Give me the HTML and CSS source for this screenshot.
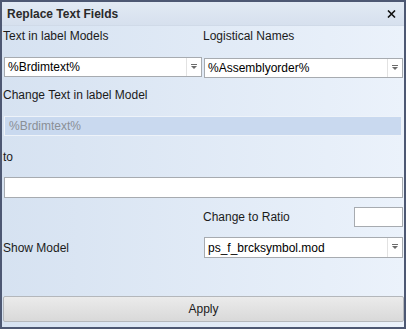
FILE: index.html
```html
<!DOCTYPE html>
<html>
<head>
<meta charset="utf-8">
<link rel="stylesheet" href="styles.css">
</head>
<body>
<div class="window">
  <div class="titlebar">
    <span class="title">Replace Text Fields</span>
    <svg class="close" width="9" height="8" viewBox="0 0 9 8"><path d="M1 0.5 L8 7.5 M8 0.5 L1 7.5" stroke="#111" stroke-width="1.6" fill="none"/></svg>
  </div>
  <div class="content">
    <div class="row row-labels">
      <span class="label">Text in label Models</span>
      <span class="label">Logistical Names</span>
    </div>
    <div class="row row-combos">
      <div class="combo"><span class="value">%Brdimtext%</span><span class="drop"><i class="arrow"></i></span></div>
      <div class="combo combo-low"><span class="value">%Assemblyorder%</span><span class="drop"><i class="arrow"></i></span></div>
    </div>
    <div class="line line-change"><span class="label">Change Text in label Model</span></div>
    <div class="textbox disabled">%Brdimtext%</div>
    <div class="line line-to"><span class="label">to</span></div>
    <div class="textbox"></div>
    <div class="row row-ratio">
      <span></span>
      <div class="ratio">
        <span class="label">Change to Ratio</span>
        <div class="small-box"></div>
      </div>
    </div>
    <div class="row row-model">
      <span class="label">Show Model</span>
      <div class="combo"><span class="value">ps_f_brcksymbol.mod</span><span class="drop"><i class="arrow"></i></span></div>
    </div>
    <div class="spacer"></div>
    <button class="apply">Apply</button>
  </div>
</div>
</body>
</html>
```

FILE: styles.css
```css
* { box-sizing: border-box; }
html, body { margin: 0; padding: 0; }
body {
  width: 406px;
  height: 329px;
  font-family: "Liberation Sans", Arial, sans-serif;
  font-size: 12px;
  color: #1b1b1b;
}
.window {
  width: 406px;
  height: 329px;
  border: 2px solid #4d5873;
  display: flex;
  flex-direction: column;
  background: linear-gradient(to right, #d6e2f1, #ebf2fb);
}
.titlebar {
  height: 24px;
  flex: none;
  display: flex;
  align-items: center;
  justify-content: space-between;
  padding: 0 8px 0 5px;
  background: linear-gradient(to bottom, #e2eaf4, #d6e0ee);
  border-bottom: 1px solid #d0dae8;
}
.title {
  font-weight: bold;
  font-size: 12px;
  color: #2a2a2a;
}
.close { display: block; }
.content {
  flex: 1;
  display: flex;
  flex-direction: column;
  padding: 0 2px 5px 2px;
}
.row {
  display: grid;
  grid-template-columns: 198px 199px;
  column-gap: 2px;
  align-items: center;
}
.label { margin-left: -1px; white-space: nowrap; }
.row-labels { height: 20px; margin-bottom: 11px; }
.row-combos { height: 22px; align-items: start; }
.combo {
  height: 20px;
  border: 1px solid #a7abb0;
  background: #fff;
  display: flex;
  align-items: center;
}
.combo-low { margin-top: 1px; }
.combo .value { flex: 1; padding-left: 3px; color: #000; }
.drop {
  width: 15px;
  height: 100%;
  border-left: 1px solid #e2e2e2;
  display: flex;
  align-items: center;
  justify-content: center;
}
.arrow {
  display: block;
  width: 0; height: 0;
  border-left: 3px solid transparent;
  border-right: 3px solid transparent;
  border-top: 3px solid #6b6b6b;
  position: relative;
}
.arrow::before {
  content: "";
  position: absolute;
  left: -3px; top: -5px;
  width: 6px; height: 1px;
  background: #6b6b6b;
}
.line { height: 20px; display: flex; align-items: center; }
.line-change { margin-top: 6px; margin-bottom: 11px; }
.line-to { margin-top: 11px; margin-bottom: 10px; }
.textbox {
  height: 21px;
  border: 1px solid #a7abb0;
  background: #fff;
  width: 399px;
  padding-left: 4px;
  display: flex;
  align-items: center;
}
.textbox.disabled {
  background: #c9d9ef;
  border-color: #eef3f9;
  color: #8a8f96;
  height: 20px;
  width: 398px;
}
.row-ratio { height: 20px; margin-top: 9px; }
.ratio { display: flex; align-items: center; justify-content: space-between; }
.small-box {
  width: 49px;
  height: 20px;
  border: 1px solid #a7abb0;
  background: #fff;
}
.row-model { height: 21px; margin-top: 10px; }
.row-model .combo { height: 21px; }
.spacer { flex: 1; }
.apply {
  height: 26px;
  width: 401px;
  margin-left: -1px;
  font-family: inherit;
  font-size: 12px;
  color: #1b1b1b;
  border: 1px solid #b4b7bb;
  border-radius: 2px;
  background: linear-gradient(to bottom, #ebebeb, #d9d9d9);
  padding: 0;
}
```
